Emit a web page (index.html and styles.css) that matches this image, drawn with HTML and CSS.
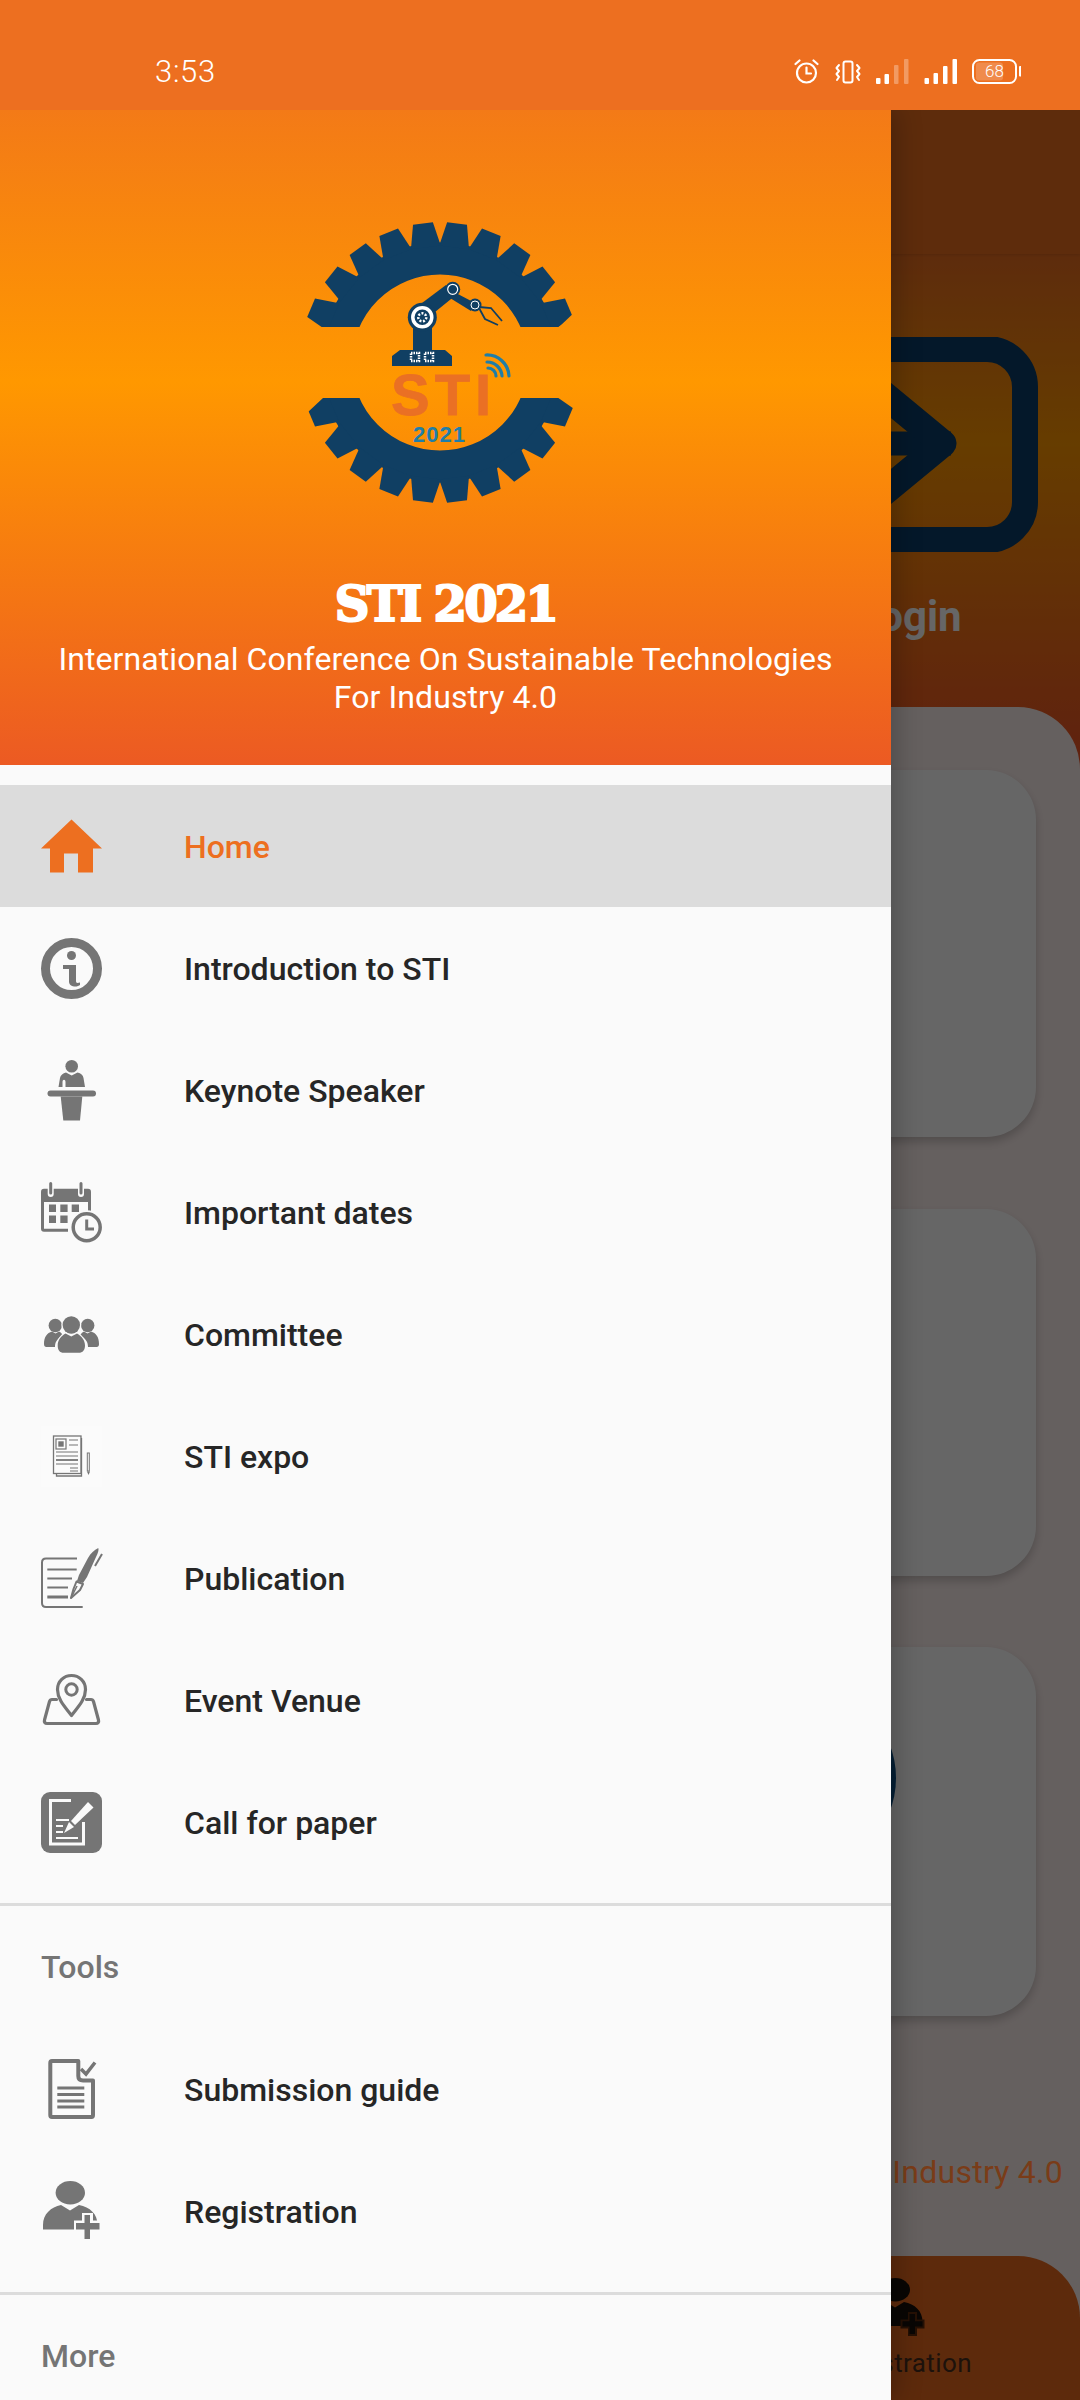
FILE: index.html
```html
<!DOCTYPE html>
<html lang="en">
<head>
<meta charset="utf-8">
<title>STI 2021</title>
<link rel="stylesheet" href="styles.css">
</head>
<body>
<div class="app">
  <header class="statusbar">
    <span class="clock">3:53</span>
    <div class="status-icons">
      <svg class="st-alarm" viewBox="0 0 25 25"><g fill="none" stroke="#fff" stroke-width="2.2" stroke-linecap="round"><circle cx="12.5" cy="14" r="9.5"/><path d="M12.5 8.5V14.5H17"/><path d="M1.5 5L5.5 1.5M23.5 5L19.5 1.5"/></g></svg>
      <svg class="st-vibrate" viewBox="0 0 28 25"><g fill="none" stroke="#fff" stroke-width="2" stroke-linecap="round" stroke-linejoin="round"><rect x="10.5" y="2.5" width="9" height="21" rx="2"/><path d="M6 6L3.5 9L6 12L3.5 15L6 18L4 21"/><path d="M24 6L26.5 9L24 12L26.5 15L24 18L26 21"/></g></svg>
      <svg class="st-signal" viewBox="0 0 35 25"><g fill="#fff"><rect x="1" y="19" width="4.5" height="6" rx="1"/><rect x="9.5" y="15" width="4.5" height="10" rx="1"/><rect x="19" y="6" width="4.5" height="19" rx="1" opacity=".3"/><rect x="29" y="0" width="4.5" height="25" rx="1" opacity=".3"/></g></svg>
      <svg class="st-signal2" viewBox="0 0 34 25"><g fill="#fff"><rect x="0.5" y="19" width="4.5" height="6" rx="1"/><rect x="9.5" y="14" width="4.5" height="11" rx="1"/><rect x="19" y="7" width="4.5" height="18" rx="1"/><rect x="28.5" y="0" width="4.5" height="25" rx="1"/></g></svg>
      <svg class="st-battery" viewBox="0 0 49 25"><rect x="4" y="3.5" width="27" height="18" rx="3" fill="#fff" opacity=".2"/><rect x="1" y="1" width="43" height="23" rx="6.5" fill="none" stroke="#fff" stroke-width="2"/><rect x="47" y="7" width="2.5" height="10.5" rx="1" fill="#fff"/><text class="batt-text" x="22.5" y="18" text-anchor="middle">68</text></svg>
    </div>
  </header>

  <main class="page">
    <div class="toolbar"></div>
    <div class="page-body">
      <section class="hero">
        <div class="hero-cell">
          <svg class="login-icon" viewBox="0 0 278 215"><rect x="14" y="12" width="250" height="191" rx="38" fill="none" stroke="#0a3e69" stroke-width="26"/><path d="M60 106.500H190" stroke="#0a3e69" stroke-width="24" fill="none"/><path d="M110 47L182 106.500L110 166" stroke="#0a3e69" stroke-width="27" stroke-linecap="round" stroke-linejoin="round" fill="none"/></svg>
          <span class="hero-label">Login</span>
        </div>
      </section>
      <section class="panel">
        <div class="card"></div>
        <div class="card"></div>
        <div class="card card-icon"><span class="card-disc"></span></div>
        <p class="tagline">Technologies For Industry 4.0</p>
        <nav class="bottom">
          <div class="bottom-cell">
            <svg class="bottom-icon" viewBox="0 0 61 61"><ellipse cx="29.300" cy="11.800" rx="14.700" ry="11.700" fill="#170f0a"/><path d="M2 48V44C2 33 10 26 20 24L29 29.500L38 24C49 26 56.500 33 56.500 44L40 48Z" fill="#170f0a"/><path d="M42 34H51V41.500H58.500V50.500H51V58H42V50.500H34.500V41.500H42Z" fill="#5d2a0c"/><path d="M43.500 36H49V43.200H56.500V48.500H49V56H43.500V48.500H36.500V43.200H43.500Z" fill="#170f0a"/></svg>
            <span class="bottom-label">Registration</span>
          </div>
        </nav>
      </section>
    </div>
  </main>

  <div class="scrim"></div>

  <aside class="drawer">
    <div class="drawer-head">
      <svg class="logo" viewBox="0 0 340 340">
        <defs>
          <polygon id="tooth" points="-15,-116 -10,-140 10,-140 15,-116"/>
          <clipPath id="gear-clip"><polygon points="0,0 340,0 340,122 304,122.700 289,137 46.700,137 38.300,130 0,120"/><polygon points="0,222 38.300,221.700 53,208 295,208 304,216.700 340,222 340,340 0,340"/></clipPath>
        </defs>
        <g clip-path="url(#gear-clip)">
          <g transform="translate(170 172.500)" fill="#103f63">
            <circle r="104" fill="none" stroke="#103f63" stroke-width="32"/>
            <use href="#tooth" transform="rotate(7)"/><use href="#tooth" transform="rotate(21.500)"/><use href="#tooth" transform="rotate(36)"/><use href="#tooth" transform="rotate(51)"/><use href="#tooth" transform="rotate(67)"/>
            <use href="#tooth" transform="rotate(-7)"/><use href="#tooth" transform="rotate(-21.500)"/><use href="#tooth" transform="rotate(-36)"/><use href="#tooth" transform="rotate(-51)"/><use href="#tooth" transform="rotate(-67)"/>
            <use href="#tooth" transform="rotate(173)"/><use href="#tooth" transform="rotate(158.500)"/><use href="#tooth" transform="rotate(144)"/><use href="#tooth" transform="rotate(129)"/><use href="#tooth" transform="rotate(113)"/>
            <use href="#tooth" transform="rotate(187)"/><use href="#tooth" transform="rotate(201.500)"/><use href="#tooth" transform="rotate(216)"/><use href="#tooth" transform="rotate(231)"/><use href="#tooth" transform="rotate(247)"/>
          </g>
        </g>
        <g fill="#103f63">
          <path d="M122 176V166L130 160H143V130H162V160H175L182 166V176Z"/>
          <path d="M152 113L176 95L186 105L165 122Z"/>
          <path d="M184 102L205 113L201 121L180 108Z"/>
          <circle cx="152.300" cy="127.300" r="14.500"/>
          <circle cx="182.700" cy="99.300" r="7.500"/>
          <circle cx="205" cy="115" r="6.500"/>
        </g>
        <g fill="none" stroke="#fff">
          <circle cx="152.300" cy="127.300" r="9.500" stroke-width="3.500"/>
          <circle cx="152.300" cy="127.300" r="4" stroke-width="2.500" stroke-dasharray="2 1.500"/>
          <circle cx="182.700" cy="99.300" r="5" stroke-width="1.200"/>
          <circle cx="205" cy="115" r="4" stroke-width="1"/>
          <rect x="141" y="163" width="8" height="8" stroke-width="2.500" stroke-dasharray="1.500 1"/>
          <rect x="155" y="163" width="8" height="8" stroke-width="2.500" stroke-dasharray="1.500 1"/>
        </g>
        <g fill="none" stroke="#103f63" stroke-width="1.800">
          <path d="M209 117L221 118L232 131"/>
          <path d="M209 118L215 129L228 135"/>
        </g>
        <g fill="none" stroke="#1f7ea8" stroke-width="3.200" stroke-linecap="round">
          <path d="M218 178A8 8 0 0 1 226 186"/>
          <path d="M217 172A15 15 0 0 1 232 186"/>
          <path d="M216 165A22 22 0 0 1 239 186"/>
        </g>
        <text class="logo-sti" x="121" y="225">STI</text>
        <text class="logo-year" x="143" y="252">2021</text>
      </svg>
      <h1 class="drawer-title">STI 2021</h1>
      <p class="drawer-sub">International Conference On Sustainable Technologies<br>For Industry 4.0</p>
    </div>

    <ul class="menu">
      <li class="item active">
        <svg class="ico" viewBox="0 0 61 61"><path class="ic-f" d="M30.500 3.500L61 32.500H52V56.500H37V37.500H23V56.500H9V32.500H0Z"/></svg>
        <span>Home</span>
      </li>
      <li class="item">
        <svg class="ico" viewBox="0 0 61 61"><circle cx="30.500" cy="30.500" r="26" class="ic-s" stroke-width="9"/><circle class="ic-f" cx="30.500" cy="17.500" r="4.500"/><path class="ic-f" d="M22 27H35V43C35 45 36 45.500 39 44.500V47C37 49 29 50 28 44V31H22Z"/></svg>
        <span>Introduction to STI</span>
      </li>
      <li class="item">
        <svg class="ico" viewBox="0 0 61 61"><circle class="ic-f" cx="30.700" cy="6.200" r="6.300"/><path class="ic-f" d="M17.500 27L19 18C19.500 15 22 13.500 25 12.500L30.700 15.500L36.500 12.500C40 13.500 42 15 42.500 18L44 27H24.500V22C24.500 19 21.500 19 21.500 22V27Z"/><rect class="ic-f" x="6.500" y="30.500" width="48.500" height="6" rx="3"/><path class="ic-f" d="M19.700 36.500H41.300L39 60.500H22.300Z"/></svg>
        <span>Keynote Speaker</span>
      </li>
      <li class="item">
        <svg class="ico" viewBox="0 0 61 61"><path class="ic-f" d="M3 6.800H47C49 6.800 50 8 50 10V39H47V20H3V46.800H27V49.800H3C1 49.800 0 48.800 0 46.800V10C0 8 1 6.800 3 6.800Z"/><g class="ic-f"><rect x="8" y="22.500" width="7" height="7.500"/><rect x="19.300" y="22.500" width="7.300" height="7.500"/><rect x="30.700" y="22.500" width="7.300" height="7.500"/><rect x="8" y="33.500" width="7" height="7.500"/><rect x="19.300" y="33.500" width="7.300" height="7.500"/></g><path d="M9.700 1.500V12M40 1.500V12" stroke="#fafafa" stroke-width="6" stroke-linecap="round"/><path d="M9.700 1.500V11M40 1.500V11" stroke="#757575" stroke-width="3" stroke-linecap="round"/><circle cx="45.700" cy="45.200" r="17" fill="#fafafa"/><circle class="ic-s" cx="45.700" cy="45.200" r="13.500" stroke-width="3.500"/><path class="ic-s" d="M45.700 37.500V47H53" stroke-width="3"/></svg>
        <span>Important dates</span>
      </li>
      <li class="item">
        <svg class="ico" viewBox="0 0 61 61"><circle class="ic-f" cx="14.300" cy="21.500" r="6.700"/><circle class="ic-f" cx="46.700" cy="21.500" r="6.700"/><path class="ic-f" d="M3 40C3 33 6 29 11 27.500L14.500 29.500L18 27.500C20 28.500 21 30 22 31C16 35 14 38 14 43H7C4 43 3 42.500 3 40Z"/><path class="ic-f" d="M58 40C58 33 55 29 50 27.500L46.500 29.500L43 27.500C41 28.500 40 30 39 31C45 35 47 38 47 43H54C57 43 58 42.500 58 40Z"/><circle cx="30.300" cy="21" r="10" fill="#fafafa"/><circle class="ic-f" cx="30.300" cy="21" r="8.700"/><path d="M15.500 42C15.500 36 19 31 24.500 28L30.300 31L36 28C41.500 31 45 36 45 42C45 47 43 50 38 50H22.500C17.500 50 15.500 47 15.500 42Z" fill="#fafafa"/><path class="ic-f" d="M16.700 41.500C16.700 36 20 32 24.500 29.500L30.300 32.500L36 29.500C40.500 32 44 36 44 41.500C44 46 42 48.800 37.500 48.800H23C18.500 48.800 16.700 46 16.700 41.500Z"/></svg>
        <span>Committee</span>
      </li>
      <li class="item">
        <svg class="ico" viewBox="0 0 61 61"><rect width="61" height="61" fill="#fbfbfb"/><path class="ic-s" stroke-width="1.300" d="M40.500 12V50H15.500V47.500"/><rect class="ic-s" x="12.500" y="10" width="27.500" height="37.500" stroke-width="1.300"/><rect class="ic-s" x="15" y="13" width="10" height="10" stroke-width="1.200"/><rect class="ic-f" x="17.300" y="15.300" width="5.400" height="5.400"/><path class="ic-s" stroke-width="1.200" d="M28 14H37M28 19H37M15 26H37M15 30H37"/><path class="ic-s" stroke-width="1.800" d="M15 34H37"/><path class="ic-s" stroke-width="1.200" d="M15 38H37M29 42H37M29 45H37"/><rect class="ic-s" x="46.300" y="27" width="2" height="18" stroke-width="1"/><path class="ic-f" d="M46 45.500H49L47.500 49Z"/></svg>
        <span>STI expo</span>
      </li>
      <li class="item">
        <svg class="ico" viewBox="0 0 61 61"><path class="ic-s" stroke-width="2" d="M36 10.500H5C2.500 10.500 1 12 1 14.500V55C1 57.500 2.500 59 5 59H41.700"/><path class="ic-s" stroke-width="2" d="M6.300 21.500H35.700M6.300 30.500H31M6.300 39.500H27"/><path class="ic-s" stroke-width="3" d="M6.300 49H27"/><path class="ic-f" d="M57.300 0C58 2 57 5 55 9L46 29L42 35L36 33L38 27L47 10C50 5 53 2 57.300 0Z"/><path d="M35.500 33.500L42 36L39 42L30 50L32.500 41Z" fill="#fafafa" stroke="#757575" stroke-width="2" stroke-linejoin="round"/><path class="ic-s" stroke-width="1.500" d="M30 50L36 38"/><path class="ic-s" stroke-width="2" d="M61 6L54 18"/></svg>
        <span>Publication</span>
      </li>
      <li class="item">
        <svg class="ico" viewBox="0 0 61 61"><path class="ic-s" stroke-width="3.200" stroke-linejoin="round" d="M30.500 45.500C25 38 16.500 30 16.500 19.500C16.500 11 23 5.500 30.500 5.500C38 5.500 44.500 11 44.500 19.500C44.500 30 36 38 30.500 45.500Z"/><circle class="ic-s" cx="30.500" cy="19.500" r="5.700" stroke-width="3"/><path class="ic-s" stroke-width="3.200" stroke-linecap="round" stroke-linejoin="round" d="M15.500 29.500H11C9.500 29.500 9 30 8.500 31.500L3.500 50C3 52 4 53.500 6 53.500H55C57 53.500 58 52 57.500 50L52.500 31.500C52 30 51.500 29.500 50 29.500H45.500"/></svg>
        <span>Event Venue</span>
      </li>
      <li class="item">
        <svg class="ico" viewBox="0 0 61 61"><rect class="ic-f" width="61" height="61" rx="9"/><path d="M30 8.500H9.500V52H42.500V30" fill="none" stroke="#fafafa" stroke-width="3"/><path d="M15 28H28M15 34H22M15 40H22M15 46H37" stroke="#fafafa" stroke-width="2" fill="none"/><path d="M47 9L53 15L31 37L22 36Z" fill="#757575"/><path d="M47 10L52.500 15.500L34 33L30 29Z" fill="#fafafa"/><path d="M28 30L33 35L23 41Z" fill="#fafafa"/></svg>
        <span>Call for paper</span>
      </li>
    </ul>

    <div class="section">
      <div class="section-title">Tools</div>
      <ul class="menu">
        <li class="item">
          <svg class="ico" viewBox="0 0 61 61"><path class="ic-s" stroke-width="4" stroke-linejoin="round" d="M37.300 2H11C9.700 2 9.300 2.500 9.300 4V56C9.300 57.500 9.700 58 11 58H50.500C51.500 58 52 57.500 52 56V21.500H42C39 21.500 37.300 20 37.300 17Z"/><path class="ic-s" stroke-width="3" d="M16.300 29H43.300M16.300 35.500H43.300M16.300 42H43.300M16.300 48H43.300"/><path class="ic-s" stroke-width="3.500" d="M40 10L45 15L54 3.500"/></svg>
          <span>Submission guide</span>
        </li>
        <li class="item">
          <svg class="ico" viewBox="0 0 61 61"><ellipse class="ic-f" cx="29.300" cy="11.800" rx="14.700" ry="11.700"/><path class="ic-f" d="M2 48.500V44C2 33 10 26 20 24L29 29.500L38 24C49 26 56.500 33 56.500 44L40 48.500Z"/><path d="M41 32H52V39.500H60V51H52V59H41V51H33V39.500H41Z" fill="#fafafa"/><path class="ic-f" d="M43.500 34H49V42H58.500V48.500H49V58H43.500V48.500H35V42H43.500Z"/></svg>
          <span>Registration</span>
        </li>
      </ul>
    </div>

    <div class="section">
      <div class="section-title">More</div>
    </div>
  </aside>
</div>
</body>
</html>
```
FILE: styles.css
```css
* { box-sizing: border-box; }
html, body { margin: 0; padding: 0; }
body { font-family: Roboto, "Noto Sans", sans-serif; background: #fafafa; }

.app {
  position: relative;
  width: 1080px;
  height: 2400px;
  overflow: hidden;
  display: flex;
  flex-direction: column;
}

/* status bar */
.statusbar {
  position: relative;
  z-index: 3;
  flex: none;
  height: 110px;
  background: #ed6f20;
  display: flex;
  align-items: flex-start;
  padding: 59px 59px 0 155px;
  color: #fff;
}
.clock { font-size: 31px; line-height: 26px; font-weight: 300; letter-spacing: .7px; }
.status-icons { margin-left: auto; display: flex; gap: 14px; height: 25px; }
.status-icons svg { display: block; height: 25px; }
.st-alarm { width: 25px; }
.st-vibrate { width: 28px; }
.st-signal { width: 35px; }
.st-signal2 { width: 34px; }
.st-battery { width: 49px; }
.batt-text { font: 300 17px Roboto, sans-serif; fill: #fff; }

/* page behind the drawer */
.page { flex: 1; display: flex; flex-direction: column; min-height: 0; }
.toolbar { flex: none; height: 144px; background: #eb6e20; box-shadow: 0 1px 3px rgba(0,0,0,.12); position: relative; }
.page-body {
  flex: 1;
  display: flex;
  flex-direction: column;
  min-height: 0;
  background: linear-gradient(#eb6e20 0, #ff9800 38%, #ef5527 100%) 0 0 / 100% 500px no-repeat, #ef5527;
}
.hero {
  flex: none;
  height: 453px;
  display: grid;
  grid-template-columns: repeat(3, 1fr);
  padding-top: 83px;
}
.hero-cell { grid-column: 3; display: flex; flex-direction: column; align-items: center; }
.login-icon { width: 278px; height: 215px; display: block; }
.hero-label { margin: 41px 0 0 18px; font-size: 42px; line-height: 48px; font-weight: 700; color: #fff; }

.panel {
  flex: 1;
  min-height: 0;
  background: #fdf0ee;
  border-radius: 62px 62px 0 0;
  padding: 63px 44px 0;
  display: flex;
  flex-direction: column;
  gap: 71.500px;
}
.card {
  flex: none;
  height: 367px;
  background: #fff;
  border-radius: 50px;
  box-shadow: 0 5px 10px rgba(0,0,0,.2);
}
.card-icon {
  height: 369px;
  display: flex;
  justify-content: flex-end;
  padding: 38px 140px 0 0;
}
.card-disc { width: 186px; height: 186px; border-radius: 50%; background: #0a4e86; }

.tagline {
  position: relative;
  z-index: 1;
  margin: 62px -44px -71.500px -44px;
  padding-right: 17px;
  text-align: right;
  font-size: 32px;
  line-height: 44px;
  letter-spacing: .25px;
  color: #7a3c18;
  white-space: nowrap;
  height: 44px;
}
.bottom {
  margin: 62px -44px 0;
  flex: 1;
  background: #e96a1e;
  border-radius: 62px 62px 0 0;
  display: grid;
  grid-template-columns: repeat(3, 1fr);
}
.bottom-cell { grid-column: 3; display: flex; flex-direction: column; align-items: center; padding-top: 22px; }
.bottom-icon { width: 61px; height: 61px; display: block; margin-left: -7px; }
.bottom-label { margin-top: 8px; font-size: 26px; line-height: 32px; letter-spacing: .4px; color: #4a2f1e; }

.scrim {
  position: absolute;
  left: 0; right: 0; top: 110px; bottom: 0;
  background: rgba(0,0,0,.6);
}

/* drawer */
.drawer {
  position: absolute;
  z-index: 2;
  left: 0; top: 110px; bottom: 0;
  width: 891px;
  background: #fafafa;
  box-shadow: 6px 0 24px rgba(0,0,0,.22);
  overflow: hidden;
}
.drawer-head {
  height: 655px;
  background: linear-gradient(#f37a17 0, #ff9800 41.500%, #ec5a23 100%);
  padding-top: 80px;
  color: #fff;
  text-align: center;
}
.logo { display: block; width: 340px; height: 340px; margin-left: 270px; }
.logo-sti { font: 700 58px "Liberation Sans", sans-serif; letter-spacing: 5px; fill: #ea7024; stroke: #ea7024; stroke-width: .8px; }
.logo-year { font: 700 22px "Liberation Sans", sans-serif; letter-spacing: 1px; fill: #1f7ea8; }
.drawer-title {
  margin: 44px 0 0;
  font: 700 48px/60px "DejaVu Serif", serif;
  -webkit-text-stroke: 2.200px #fff;
  letter-spacing: -2.700px;
}
.drawer-sub { margin: 6px 0 0; font-size: 32px; line-height: 38px; font-weight: 400; letter-spacing: .08px; }

.menu { list-style: none; margin: 0; padding: 0; }
.drawer-head + .menu { margin-top: 20px; }
.item {
  height: 122px;
  padding: 1px 0 0 41px;
  display: flex;
  align-items: center;
  gap: 82px;
  font-size: 32px;
  font-weight: 500;
  color: #262626;
}
.item .ico { margin-top: -1px; }
.item.active { background: #dcdcdc; color: #ed6f20; }
.item.active .ic-f { fill: #ed6f20; }
.ico { width: 61px; height: 61px; flex: none; display: block; overflow: visible; }
.ic-f { fill: #757575; }
.ic-s { fill: none; stroke: #757575; }

.section { margin-top: 20px; border-top: 3px solid #dcdcdc; }
.section-title {
  height: 122px;
  padding-left: 41px;
  display: flex;
  align-items: center;
  font-size: 32px;
  font-weight: 500;
  color: #757575;
}
```
